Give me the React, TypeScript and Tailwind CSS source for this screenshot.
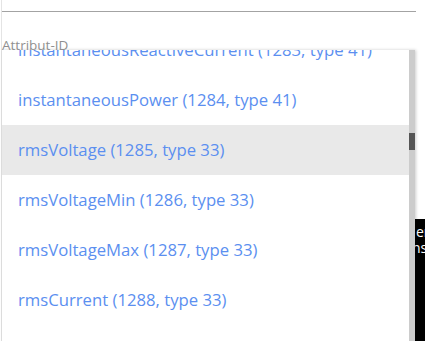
const items = [
  "instantaneousReactiveCurrent (1283, type 41)",
  "instantaneousPower (1284, type 41)",
  "rmsVoltage (1285, type 33)",
  "rmsVoltageMin (1286, type 33)",
  "rmsVoltageMax (1287, type 33)",
  "rmsCurrent (1288, type 33)",
  "rmsCurrentMin (1289, type 33)",
];

export default function App() {
  return (
    <div className="relative w-[425px] h-[341px] bg-white overflow-hidden font-['Open_Sans',sans-serif]">
      <div className="ml-px h-full border-l border-[#e4e4e4]">
        <div className="pt-[11px]">
          <div className="h-px w-[414px] bg-[#a3a3a3]"></div>
        </div>
        <div className="relative z-10 mt-[27px] text-[13.5px] leading-[13px] text-[#8f8f8f]">Attribut-ID</div>
      </div>

      {/* something behind the menu on the right */}
      <div className="absolute left-[415px] top-[219px] w-[20px] h-[130px] bg-black text-white text-[14px] leading-[16px] pt-[5px] overflow-hidden">
        <div className="pl-px">er</div>
        <div className="-ml-[3px]">ns</div>
      </div>

      {/* open dropdown menu */}
      <div className="absolute left-[2px] top-[50px] w-[413px] h-[300px] bg-white flex shadow-[1px_0_3px_rgba(0,0,0,0.2)]">
        <div className="flex-1 overflow-hidden">
          <div className="-mt-[25px]">
            {items.map((t) => (
              <div
                key={t}
                className={
                  "h-[50px] flex items-center pl-[16px] text-[16.7px] text-[#5b8ff0] " +
                  (t.startsWith("rmsVoltage (") ? "bg-[#e9e9e9]" : "")
                }
              >
                {t}
              </div>
            ))}
          </div>
        </div>
        <div className="w-[6px] h-full bg-[#cccccc] pt-[83px]">
          <div className="h-[17px] bg-[#555555]"></div>
        </div>
      </div>
    </div>
  );
}
